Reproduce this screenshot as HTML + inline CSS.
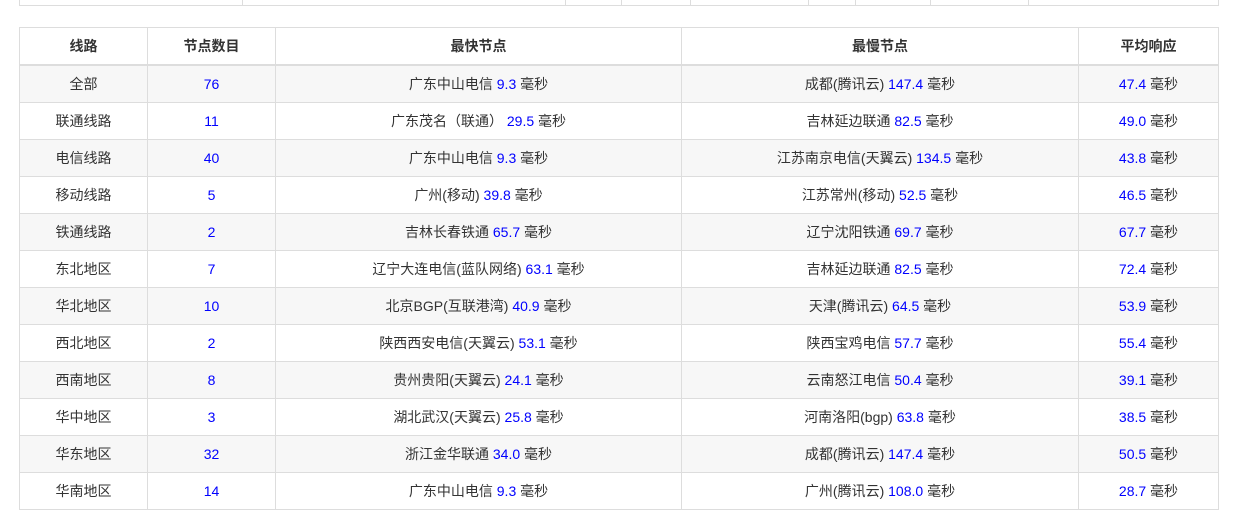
<!DOCTYPE html>
<html><head><meta charset="utf-8"><style>
body{margin:0;background:#fff;font-family:"Liberation Sans","Noto Sans CJK SC",sans-serif;font-size:14px;color:#333;}
.top{position:absolute;left:19px;top:-1px;width:1198px;height:6px;border:1px solid #ddd;border-top:none;}
.top i{position:absolute;top:0;bottom:0;width:1px;background:#ddd;}
table{position:absolute;left:19px;top:27px;border-collapse:collapse;table-layout:fixed;width:1199px;}
td,th{border:1px solid #ddd;text-align:center;padding:0;height:36px;}
th{font-weight:bold;height:36px;border-bottom:2px solid #ddd;}
tbody tr:nth-child(odd){background:#f7f7f7;}
b{font-weight:normal;color:#0000ff;}
</style></head><body>
<div class="top"><i style="left:222px"></i><i style="left:545px"></i><i style="left:601px"></i><i style="left:670px"></i><i style="left:788px"></i><i style="left:835px"></i><i style="left:910px"></i><i style="left:1008px"></i></div>
<table>
<colgroup><col style="width:128px"><col style="width:128px"><col style="width:406px"><col style="width:397px"><col style="width:140px"></colgroup>
<thead><tr><th>线路</th><th>节点数目</th><th>最快节点</th><th>最慢节点</th><th>平均响应</th></tr></thead>
<tbody>
<tr><td>全部</td><td><b>76</b></td><td>广东中山电信 <b>9.3</b> 毫秒</td><td>成都(腾讯云) <b>147.4</b> 毫秒</td><td><b>47.4</b> 毫秒</td></tr>
<tr><td>联通线路</td><td><b>11</b></td><td>广东茂名（联通） <b>29.5</b> 毫秒</td><td>吉林延边联通 <b>82.5</b> 毫秒</td><td><b>49.0</b> 毫秒</td></tr>
<tr><td>电信线路</td><td><b>40</b></td><td>广东中山电信 <b>9.3</b> 毫秒</td><td>江苏南京电信(天翼云) <b>134.5</b> 毫秒</td><td><b>43.8</b> 毫秒</td></tr>
<tr><td>移动线路</td><td><b>5</b></td><td>广州(移动) <b>39.8</b> 毫秒</td><td>江苏常州(移动) <b>52.5</b> 毫秒</td><td><b>46.5</b> 毫秒</td></tr>
<tr><td>铁通线路</td><td><b>2</b></td><td>吉林长春铁通 <b>65.7</b> 毫秒</td><td>辽宁沈阳铁通 <b>69.7</b> 毫秒</td><td><b>67.7</b> 毫秒</td></tr>
<tr><td>东北地区</td><td><b>7</b></td><td>辽宁大连电信(蓝队网络) <b>63.1</b> 毫秒</td><td>吉林延边联通 <b>82.5</b> 毫秒</td><td><b>72.4</b> 毫秒</td></tr>
<tr><td>华北地区</td><td><b>10</b></td><td>北京BGP(互联港湾) <b>40.9</b> 毫秒</td><td>天津(腾讯云) <b>64.5</b> 毫秒</td><td><b>53.9</b> 毫秒</td></tr>
<tr><td>西北地区</td><td><b>2</b></td><td>陕西西安电信(天翼云) <b>53.1</b> 毫秒</td><td>陕西宝鸡电信 <b>57.7</b> 毫秒</td><td><b>55.4</b> 毫秒</td></tr>
<tr><td>西南地区</td><td><b>8</b></td><td>贵州贵阳(天翼云) <b>24.1</b> 毫秒</td><td>云南怒江电信 <b>50.4</b> 毫秒</td><td><b>39.1</b> 毫秒</td></tr>
<tr><td>华中地区</td><td><b>3</b></td><td>湖北武汉(天翼云) <b>25.8</b> 毫秒</td><td>河南洛阳(bgp) <b>63.8</b> 毫秒</td><td><b>38.5</b> 毫秒</td></tr>
<tr><td>华东地区</td><td><b>32</b></td><td>浙江金华联通 <b>34.0</b> 毫秒</td><td>成都(腾讯云) <b>147.4</b> 毫秒</td><td><b>50.5</b> 毫秒</td></tr>
<tr><td>华南地区</td><td><b>14</b></td><td>广东中山电信 <b>9.3</b> 毫秒</td><td>广州(腾讯云) <b>108.0</b> 毫秒</td><td><b>28.7</b> 毫秒</td></tr>
</tbody></table>
</body></html>
